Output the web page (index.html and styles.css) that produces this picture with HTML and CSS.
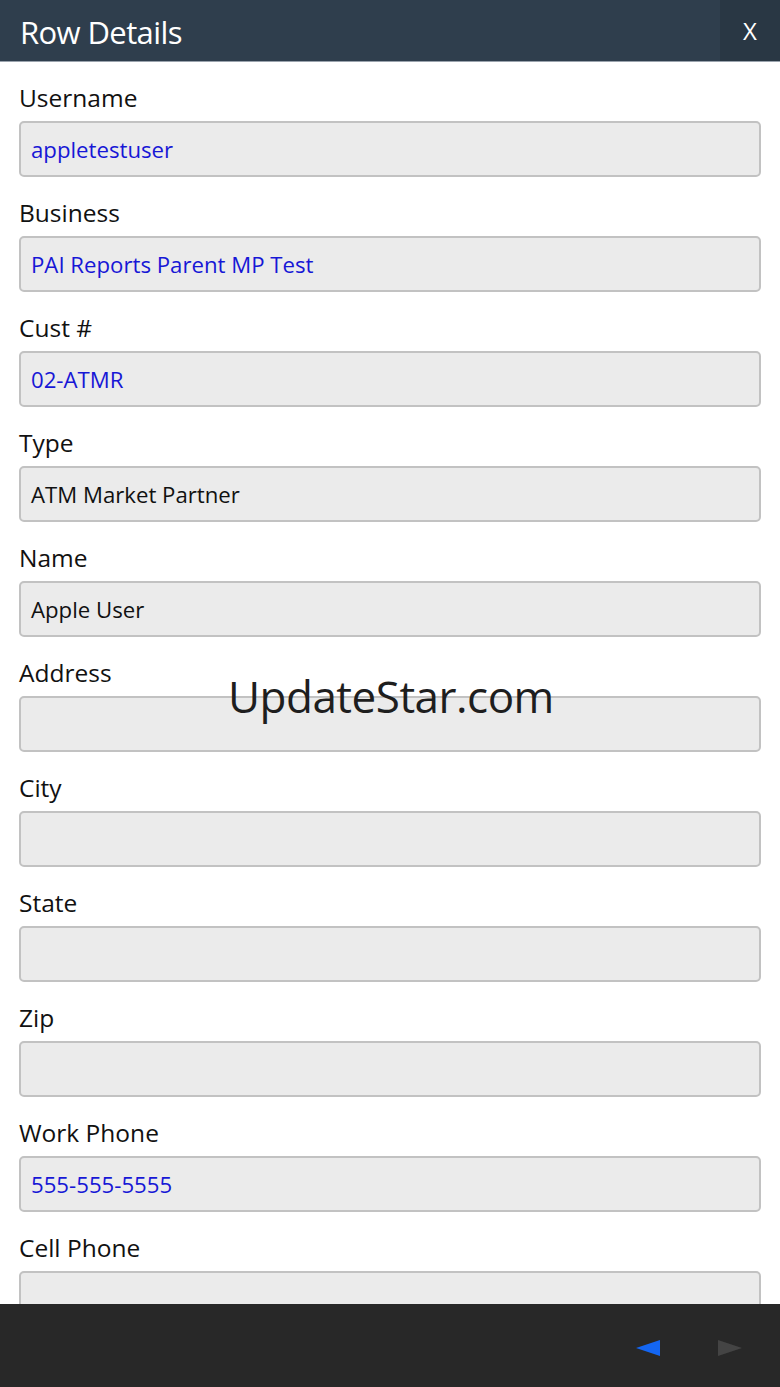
FILE: index.html
```html
<!DOCTYPE html>
<html>
<head>
<meta charset="utf-8">
<link rel="stylesheet" href="styles.css">
</head>
<body>
<div class="app">
  <header class="topbar">
    <div class="title">Row Details</div>
    <div class="close">X</div>
  </header>
  <main class="content">
    <div class="field"><div class="label">Username</div><div class="input link">appletestuser</div></div>
    <div class="field"><div class="label">Business</div><div class="input link">PAI Reports Parent MP Test</div></div>
    <div class="field"><div class="label">Cust #</div><div class="input link">02-ATMR</div></div>
    <div class="field"><div class="label">Type</div><div class="input">ATM Market Partner</div></div>
    <div class="field"><div class="label">Name</div><div class="input">Apple User</div></div>
    <div class="field"><div class="label">Address</div><div class="input"></div></div>
    <div class="field"><div class="label">City</div><div class="input"></div></div>
    <div class="field"><div class="label">State</div><div class="input"></div></div>
    <div class="field"><div class="label">Zip</div><div class="input"></div></div>
    <div class="field"><div class="label">Work Phone</div><div class="input link">555-555-5555</div></div>
    <div class="field"><div class="label">Cell Phone</div><div class="input"></div></div>
  </main>
  <footer class="bottombar">
    <span class="arrow prev"></span>
    <span class="arrow next"></span>
  </footer>
  <div class="watermark">UpdateStar.com</div>
</div>
</body>
</html>
```
FILE: styles.css
```css
* { box-sizing: border-box; }
html, body { margin: 0; padding: 0; }
body { background: #fff; font-family: "Open Sans", "DejaVu Sans", sans-serif; }
.app { position: relative; width: 780px; height: 1387px; display: flex; flex-direction: column; overflow: hidden; }
.topbar { height: 62px; flex: none; background: #2f3e4d; display: flex; align-items: stretch; justify-content: space-between; border-bottom: 1px solid #9aa3ad; }
.title { color: #fff; font-size: 31px; line-height: 64px; padding-left: 20px; letter-spacing: -0.6px; }
.close { width: 60px; background: #293744; color: #fff; font-size: 24px; display: flex; align-items: center; justify-content: center; }
.content { flex: 1; overflow: hidden; padding: 19px 19px 0 19px; }
.field { margin-bottom: 19px; }
.label { font-size: 24.5px; line-height: 34px; color: #111; margin-bottom: 6px; }
.input { height: 56px; background: #ebebeb; border: 2px solid #c2c2c2; border-radius: 5px; font-size: 22.2px; line-height: 54px; padding-left: 10px; color: #111; }
.input.link { color: #1717d6; }
.bottombar { height: 83px; flex: none; background: #282828; display: flex; justify-content: flex-end; align-items: center; padding: 5px 38px 0 0; gap: 58px; }
.arrow { width: 0; height: 0; border-top: 8px solid transparent; border-bottom: 8px solid transparent; }
.prev { border-right: 24px solid #1466f2; }
.next { border-left: 24px solid #444; }
.watermark { position: absolute; left: 228px; top: 666px; font-size: 44px; color: #1e1e1e; letter-spacing: -0.5px; }
```
